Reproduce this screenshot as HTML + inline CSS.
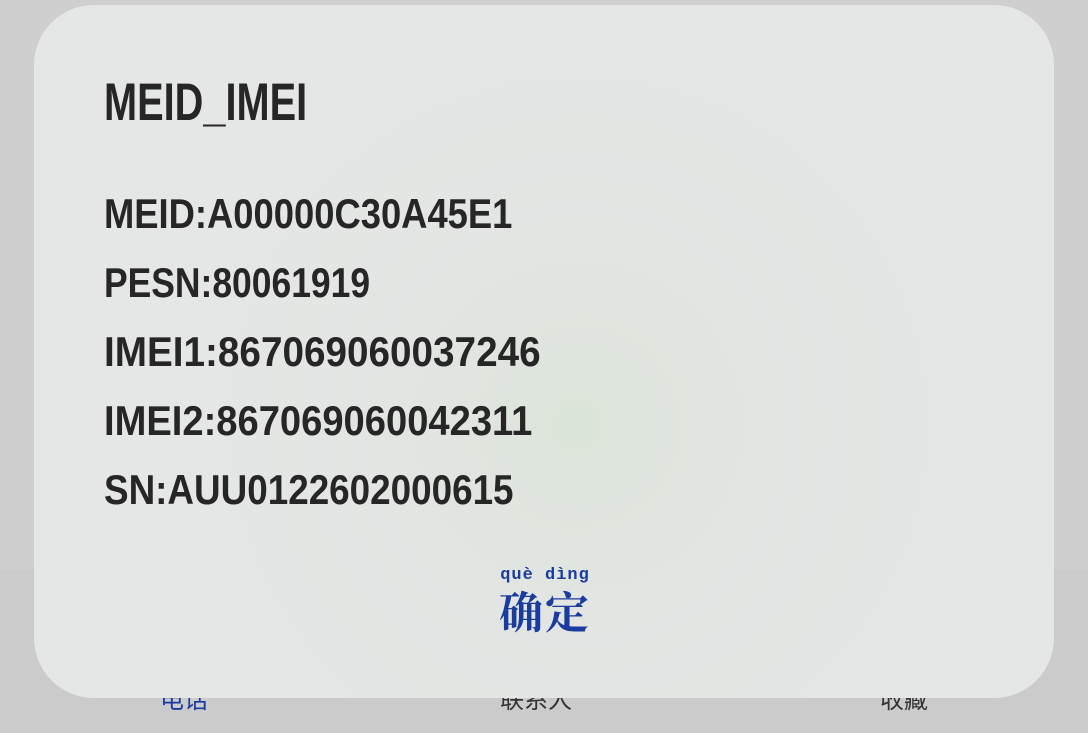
<!DOCTYPE html>
<html><head><meta charset="utf-8"><style>
html,body{margin:0;padding:0}
body{width:1088px;height:733px;background:#cbcbcb;position:relative;overflow:hidden;font-family:"Liberation Sans","Noto Sans CJK SC",sans-serif}
.top{position:absolute;left:0;top:0;width:1088px;height:570px;background:#cfcfcf}
.tab{position:absolute;top:680px;font-size:24px;color:#333;font-family:"Noto Sans CJK SC",sans-serif}
.dlg{position:absolute;left:34px;top:5px;width:1020px;height:693px;border-radius:60px;background:radial-gradient(circle at 545px 420px,#dce5da 0,#e2e5e2 180px,#e5e6e6 380px);}
.t{position:absolute;left:104px;white-space:nowrap;transform-origin:0 0;color:#262626;font-weight:bold}
.h{top:72px;font-size:53px;transform:scaleX(.75)}
.l{font-size:42px}
.btn{position:absolute;left:445px;top:566px;width:200px;text-align:center;color:#1a3c9e;white-space:nowrap}
.py{font-size:17px;line-height:20px;font-weight:bold;letter-spacing:1px;font-family:"Liberation Mono",monospace}
.cn{font-size:44px;line-height:46px;font-family:"Noto Serif CJK SC","Noto Sans CJK SC",serif;font-weight:bold;letter-spacing:2px}
</style></head><body>
<div class="top"></div>
<div class="tab" style="left:160px;color:#1a3c9e">电话</div>
<div class="tab" style="left:500px">联系人</div>
<div class="tab" style="left:880px">收藏</div>
<div class="dlg"></div>
<div class="t h">MEID_IMEI</div>
<div class="t l" style="top:190px;transform:scaleX(.866)">MEID:A00000C30A45E1</div>
<div class="t l" style="top:259px;transform:scaleX(.844)">PESN:80061919</div>
<div class="t l" style="top:328px;transform:scaleX(.921)">IMEI1:867069060037246</div>
<div class="t l" style="top:397px;transform:scaleX(.908)">IMEI2:867069060042311</div>
<div class="t l" style="top:466px;transform:scaleX(.877)">SN:AUU0122602000615</div>
<div class="btn"><div class="py">què&nbsp;dìng</div><div class="cn">确定</div></div>
</body></html>
